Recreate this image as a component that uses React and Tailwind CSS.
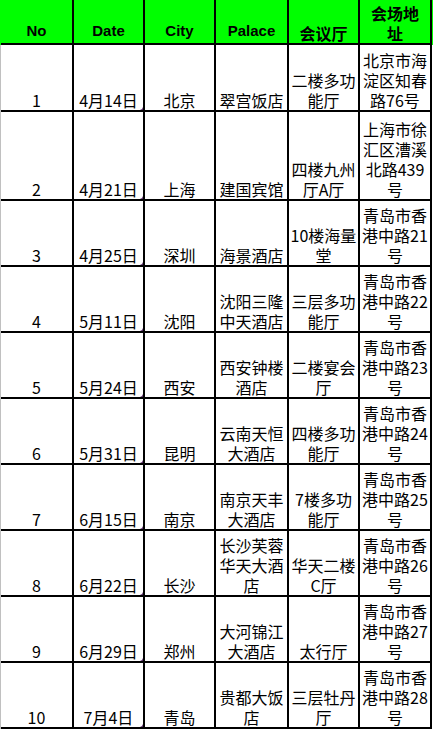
// Conference schedule sheet, laid out like an Excel export.
import React from "react";

const cols = "grid grid-cols-[73px_71px_71px_73px_71px_72px]";
const cjk = { fontFamily: '"Noto Sans CJK SC", "Noto Sans", sans-serif' };

const headers = [
  { label: "No", latin: true },
  { label: "Date", latin: true },
  { label: "City", latin: true },
  { label: "Palace", latin: true },
  { label: "会议厅" },
  { label: ["会场地", "址"] },
];

const rows = [
  { h: "h-[67px]", no: "1", date: "4月14日", city: "北京", palace: ["翠宫饭店"], hall: ["二楼多功", "能厅"], addr: ["北京市海", "淀区知春", "路76号"] },
  { h: "h-[89px]", no: "2", date: "4月21日", city: "上海", palace: ["建国宾馆"], hall: ["四楼九州", "厅A厅"], addr: ["上海市徐", "汇区漕溪", "北路439", "号"] },
  { h: "h-[66px]", no: "3", date: "4月25日", city: "深圳", palace: ["海景酒店"], hall: ["10楼海量", "堂"], addr: ["青岛市香", "港中路21", "号"] },
  { h: "h-[66px]", no: "4", date: "5月11日", city: "沈阳", palace: ["沈阳三隆", "中天酒店"], hall: ["三层多功", "能厅"], addr: ["青岛市香", "港中路22", "号"] },
  { h: "h-[66px]", no: "5", date: "5月24日", city: "西安", palace: ["西安钟楼", "酒店"], hall: ["二楼宴会", "厅"], addr: ["青岛市香", "港中路23", "号"] },
  { h: "h-[66px]", no: "6", date: "5月31日", city: "昆明", palace: ["云南天恒", "大酒店"], hall: ["四楼多功", "能厅"], addr: ["青岛市香", "港中路24", "号"] },
  { h: "h-[66px]", no: "7", date: "6月15日", city: "南京", palace: ["南京天丰", "大酒店"], hall: ["7楼多功", "能厅"], addr: ["青岛市香", "港中路25", "号"] },
  { h: "h-[66px]", no: "8", date: "6月22日", city: "长沙", palace: ["长沙芙蓉", "华天大酒", "店"], hall: ["华天二楼", "C厅"], addr: ["青岛市香", "港中路26", "号"] },
  { h: "h-[66px]", no: "9", date: "6月29日", city: "郑州", palace: ["大河锦江", "大酒店"], hall: ["太行厅"], addr: ["青岛市香", "港中路27", "号"] },
  { h: "h-[66px]", no: "10", date: "7月4日", city: "青岛", palace: ["贵都大饭", "店"], hall: ["三层牡丹", "厅"], addr: ["青岛市香", "港中路28", "号"] },
];

function Cell({ lines, mark }) {
  const list = Array.isArray(lines) ? lines : [lines];
  return (
    <div className="relative flex flex-col items-center justify-end border-r-2 border-b-2 border-black text-center text-[16px] leading-[20px] text-black" style={cjk}>
      {list.map((line, i) => (
        <span key={i} className="whitespace-nowrap">{line}</span>
      ))}
      {/* tiny indicator in the corner of date cells */}
      {mark && <span className="absolute right-0 bottom-0 h-0 w-0 border-l-[2px] border-t-[2px] border-l-transparent border-t-transparent border-r-[1px] border-b-[1px] border-r-[#5a2a6a] border-b-[#5a2a6a]" />}
    </div>
  );
}

export default function App() {
  return (
    <div className="min-h-screen w-[433px] bg-white">
      {/* Header row */}
      <div className={`${cols} h-[45px] w-[433px] border-l border-[#00ff00] bg-[#00ff00]`}>
        {headers.map((hd, i) => {
          const list = Array.isArray(hd.label) ? hd.label : [hd.label];
          return (
            <div
              key={i}
              className={`flex flex-col items-center justify-end border-r-2 border-b-2 border-black font-bold text-black ${hd.latin ? "text-[15px] leading-[20px] pb-[2px]" : "text-[16px] leading-[20px]"}`}
              style={hd.latin ? { fontFamily: '"Liberation Sans", Arial, sans-serif' } : cjk}
            >
              {list.map((line, j) => (
                <span key={j} className="whitespace-nowrap">{line}</span>
              ))}
            </div>
          );
        })}
      </div>

      {/* Body rows */}
      {rows.map((r) => (
        <div key={r.no} className={`${cols} ${r.h} border-l border-[#c0c0c0]`}>
          <Cell lines={r.no} />
          <Cell lines={r.date} mark />
          <Cell lines={r.city} />
          <Cell lines={r.palace} />
          <Cell lines={r.hall} />
          <Cell lines={r.addr} />
        </div>
      ))}
    </div>
  );
}
